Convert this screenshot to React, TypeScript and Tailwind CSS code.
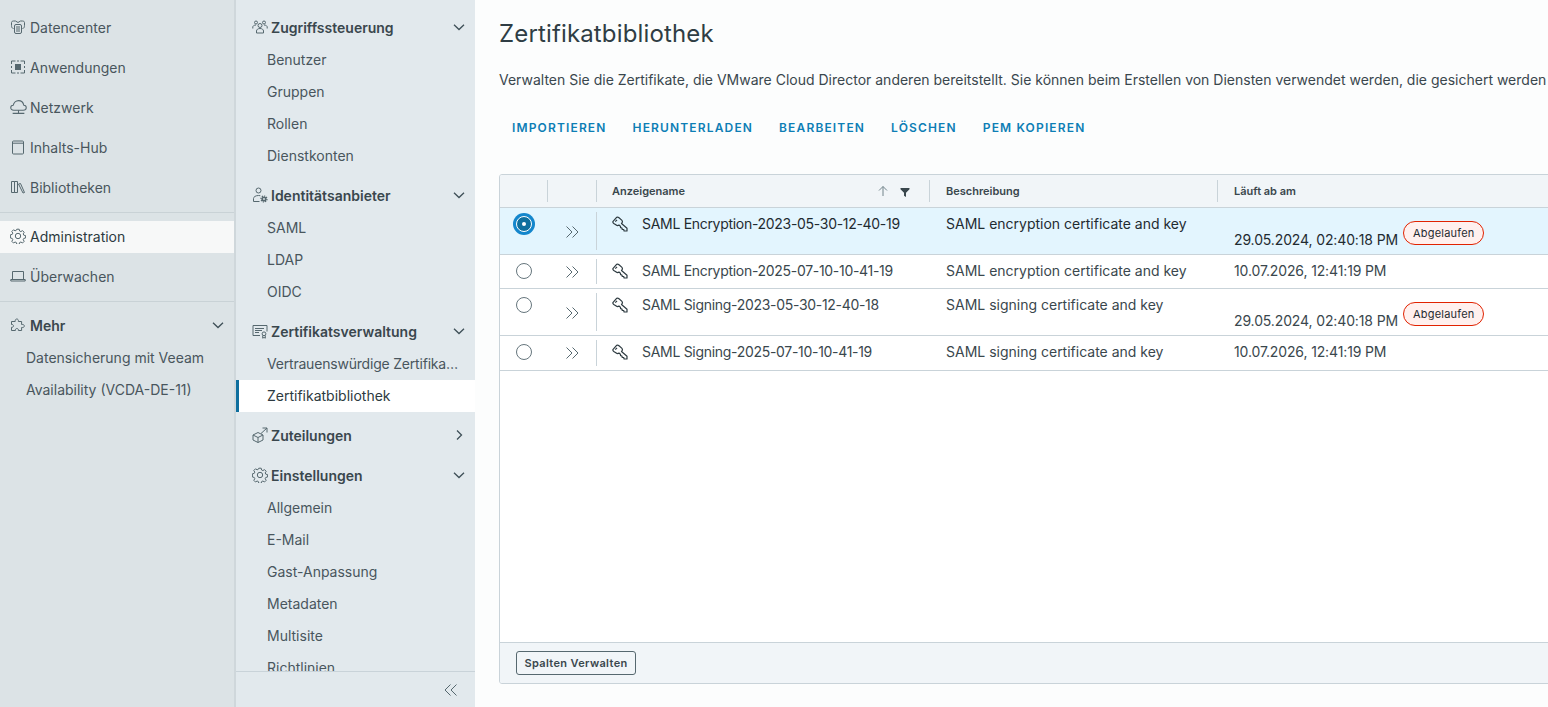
import type { ReactNode } from 'react';

const Icon = ({ children, className = 'w-4 h-4' }: { children: ReactNode; className?: string }) => (
  <svg viewBox="0 0 16 16" fill="none" stroke="currentColor" strokeWidth="1" className={`${className} shrink-0`}>
    {children}
  </svg>
);

const Datacenter = () => (
  <Icon>
    <path d="M3.500 9.500C2 9.500 1.500 8 1.500 6.500V3.500C1.500 2.500 2.500 2 3.500 2H5.500L8 3.500 10.500 2H12.500C13.500 2 14.500 2.500 14.500 3.500V6.500C14.500 8 14 9.500 12.500 9.500" />
    <rect x="4.500" y="5.500" width="7" height="9" rx="1.500" />
    <path d="M6 8h4M6 10h4M6 12h4" />
  </Icon>
);
const Apps = () => (
  <Icon>
    <rect x="5" y="5" width="6" height="6" fill="currentColor" stroke="none" />
    <path d="M1.500 5V2h4M10.500 2h4v3M14.500 11v3h-4M5.500 14h-4v-3M7 2h2M7 14h2M1.500 7v2M14.500 7v2" />
  </Icon>
);
const Cloud = () => (
  <Icon className="w-[17px] h-[17px]">
    <path d="M3.500 10.500C1.500 10.500.7 9.300.7 8.200c0-1.200 1-2.200 2.300-2.300C3.500 3.500 5.700 1.500 8 1.500c2.500 0 4.500 1.900 5 4.400 1.300.1 2.300 1.100 2.300 2.300 0 1.100-.8 2.300-2.800 2.300z" />
    <path d="M8 10.500v3M2.500 13.500h11" />
  </Icon>
);
const Book = () => (
  <Icon>
    <rect x="2.500" y="2" width="11" height="13" rx="1" />
    <path d="M2.500 4.200h11" />
  </Icon>
);
const Library = () => (
  <Icon>
    <path d="M1.500 2.500h3v11h-3zM4.500 2.500h3v11h-3zM8.500 5l2-.5 4 9-1.500.5z" />
  </Icon>
);
const Gear = () => (
  <Icon>
    <circle cx="8" cy="8" r="2.700" />
    <path d="M6.800 1.200h2.400l.4 1.800 1.300.6 1.600-1 1.700 1.700-1 1.600.6 1.300 1.800.4v2.400l-1.800.4-.6 1.300 1 1.600-1.700 1.700-1.600-1-1.300.6-.4 1.800H6.800l-.4-1.800-1.300-.6-1.600 1-1.700-1.700 1-1.600-.6-1.300-1.800-.4V6.800l1.800-.4.6-1.300-1-1.600 1.700-1.700 1.600 1 1.300-.6z" strokeLinejoin="round" />
  </Icon>
);
const Laptop = () => (
  <Icon>
    <path d="M2.500 11V3.500h11V11" />
    <path d="M.8 11.500h14.400v1.500H.8z" />
  </Icon>
);
const Puzzle = () => (
  <Icon>
    <path d="M1.500 4.500h3.700C5 2.800 5.800 2 6.800 2s1.800.8 1.600 2.500h3.200v3c1.700-.2 2.800.5 2.800 1.500s-1.100 1.700-2.800 1.500v3h-3.200c.2-1.300-.5-2-1.500-2s-1.700.7-1.500 2H1.500v-3.200c1.300.2 2-.5 2-1.400s-.7-1.600-2-1.400z" strokeLinejoin="round" />
  </Icon>
);
const Users = () => (
  <Icon>
    <circle cx="8" cy="6.500" r="2" />
    <path d="M4.500 14v-2c0-1.500 1.500-2.500 3.500-2.500s3.500 1 3.500 2.500v2z" />
    <circle cx="4" cy="3.500" r="1.500" />
    <circle cx="12" cy="3.500" r="1.500" />
    <path d="M.8 9.500V8c0-1 1.200-2 3.200-2M15.200 9.500V8c0-1-1.200-2-3.200-2" />
  </Icon>
);
const UserGear = () => (
  <Icon>
    <circle cx="6.500" cy="3.500" r="2.500" />
    <path d="M1.500 14.500v-3c0-1.500 2-3 5-3 .7 0 1.300.1 1.800.2M1.500 14.500h6" />
    <circle cx="12" cy="12" r="2.600" fill="currentColor" stroke="none" />
    <circle cx="12" cy="12" r="3" strokeDasharray="1.200 1.100" strokeWidth="1.200" />
    <circle cx="12" cy="12" r=".9" fill="#e2e9ed" stroke="none" />
  </Icon>
);
const Certificate = () => (
  <Icon>
    <path d="M8 12.500H1V2.500h14v6" />
    <path d="M3 5.500h9M3 7.500h7M3 9.500h4" />
    <circle cx="12" cy="10.800" r="1.900" />
    <path d="M10.700 12.500v2.700l1.300-.8 1.300.8v-2.700" />
  </Icon>
);
const BoxArrow = () => (
  <Icon>
    <path d="M1 8l5-2.500L11 8v5l-5 2.500L1 13zM1 8l5 2.500L11 8M6 10.500v5" />
    <path d="M9 6.500L15 1M10.500 1H15v4.500" />
  </Icon>
);
const Key = () => (
  <svg viewBox="0 0 16 16" fill="none" stroke="currentColor" strokeWidth="1.200" className="w-4 h-4 shrink-0">
    <path
      d="M.9 5.700L4.800 1.200C5.500.9 6.300 1.100 7 1.700L9.700 4.100C10.400 4.800 10.600 5.800 10.100 6.700L9.500 7.500 15 12.200V15H12.100L11.700 13.500H10.300L9.900 12 8.600 11.600 8.400 10.200 7 9C6.100 9.700 5 9.600 4.200 9L1.800 7.400C1 6.800.7 6.200.9 5.700z"
      strokeLinejoin="round"
    />
    <path d="M3.300 5.600L5 3.800" />
  </svg>
);

const Chevron = ({ right = false }: { right?: boolean }) => (
  <svg viewBox="0 0 12 12" fill="none" stroke="currentColor" strokeWidth="1.300" className="w-3 h-3 text-[#3f5058]">
    <path d={right ? 'M4 1.500L8.500 6 4 10.500' : 'M1 3.700L6 8.500l5-4.800'} />
  </svg>
);
const DoubleAngle = ({ left = false }: { left?: boolean }) => (
  <svg viewBox="0 0 14 14" fill="none" stroke="currentColor" strokeWidth="1" className="w-[14px] h-[14px] text-[#56686f]">
    <path d={left ? 'M6.500 1.500L1 7l5.500 5.500M12.500 1.500L7 7l5.500 5.500' : 'M1.500 1.500L7 7l-5.500 5.500M7.500 1.500L13 7l-5.500 5.500'} />
  </svg>
);

const mainNav: { label: string; icon: ReactNode }[] = [
  { label: 'Datencenter', icon: <Datacenter /> },
  { label: 'Anwendungen', icon: <Apps /> },
  { label: 'Netzwerk', icon: <Cloud /> },
  { label: 'Inhalts-Hub', icon: <Book /> },
  { label: 'Bibliotheken', icon: <Library /> },
];

const groups: { title: string; icon: ReactNode; open: boolean; items: string[] }[] = [
  { title: 'Zugriffssteuerung', icon: <Users />, open: true, items: ['Benutzer', 'Gruppen', 'Rollen', 'Dienstkonten'] },
  { title: 'Identitätsanbieter', icon: <UserGear />, open: true, items: ['SAML', 'LDAP', 'OIDC'] },
  { title: 'Zertifikatsverwaltung', icon: <Certificate />, open: true, items: ['Vertrauenswürdige Zertifika…', 'Zertifikatbibliothek'] },
  { title: 'Zuteilungen', icon: <BoxArrow />, open: false, items: [] },
  { title: 'Einstellungen', icon: <Gear />, open: true, items: ['Allgemein', 'E-Mail', 'Gast-Anpassung', 'Metadaten', 'Multisite', 'Richtlinien'] },
];

const rows = [
  { name: 'SAML Encryption-2023-05-30-12-40-19', desc: 'SAML encryption certificate and key', date: '29.05.2024, 02:40:18 PM', expired: true, selected: true },
  { name: 'SAML Encryption-2025-07-10-10-41-19', desc: 'SAML encryption certificate and key', date: '10.07.2026, 12:41:19 PM', expired: false, selected: false },
  { name: 'SAML Signing-2023-05-30-12-40-18', desc: 'SAML signing certificate and key', date: '29.05.2024, 02:40:18 PM', expired: true, selected: false },
  { name: 'SAML Signing-2025-07-10-10-41-19', desc: 'SAML signing certificate and key', date: '10.07.2026, 12:41:19 PM', expired: false, selected: false },
];

const actions = ['Importieren', 'Herunterladen', 'Bearbeiten', 'Löschen', 'PEM kopieren'];
const cols = 'grid grid-cols-[48px_49px_333px_288px_1fr]';

const HeaderCell = ({ children, last = false }: { children?: ReactNode; last?: boolean }) => (
  <div className={`h-[22px] flex items-center pl-[16px] ${last ? '' : 'border-r border-[#c9d3d9]'}`}>{children}</div>
);

export default function App() {
  return (
    <div className="flex h-[707px] w-[1548px] overflow-hidden bg-[#fcfdfd] text-[#49565d] font-['Inter','Noto_Sans',sans-serif] text-[14px]">
      {/* Primary nav */}
      <nav className="w-[236px] shrink-0 bg-[#dce3e6] border-r-2 border-[#cfd7db] pt-2">
        {mainNav.map((n) => (
          <div key={n.label} className="h-10 flex items-center gap-1 pl-[10px] pb-[2px]">
            <span className="w-4 flex justify-center text-[#56686f]">{n.icon}</span>
            <span>{n.label}</span>
          </div>
        ))}
        <div className="mt-1 border-t border-[#c9d2d6]" />
        <div className="mt-2 h-8 flex items-center gap-1 pl-[10px] pb-[2px] bg-[#f7f8f8] text-[#2d3a40]">
          <span className="w-4 flex justify-center text-[#56686f]"><Gear /></span>
          <span>Administration</span>
        </div>
        <div className="mt-1 h-10 flex items-center gap-1 pl-[10px] pb-[2px]">
          <span className="w-4 flex justify-center text-[#56686f]"><Laptop /></span>
          <span>Überwachen</span>
        </div>
        <div className="mt-1 border-t border-[#c9d2d6]" />
        <div className="mt-2 h-8 flex items-center gap-1 pl-[10px] pr-[10px] pb-[2px] font-semibold text-[#3a474d]">
          <span className="w-4 flex justify-center text-[#56686f]"><Puzzle /></span>
          <span className="flex-1">Mehr</span>
          <Chevron />
        </div>
        <div className="h-8 flex items-center pl-[26px] pb-[2px]">Datensicherung mit Veeam</div>
        <div className="h-8 flex items-center pl-[26px] pb-[2px]">Availability (VCDA-DE-11)</div>
      </nav>

      {/* Secondary nav */}
      <aside className="w-[239px] shrink-0 bg-[#e2e9ed] flex flex-col">
        <div className="flex-1 overflow-hidden pt-3">
          {groups.map((g) => (
            <div key={g.title} className="mb-2">
              <div className="h-8 flex items-center gap-[3px] pl-[16px] pr-[10px] pb-[2px] font-semibold text-[#3a474d]">
                <span className="text-[#56686f]">{g.icon}</span>
                <span className="flex-1">{g.title}</span>
                <Chevron right={!g.open} />
              </div>
              {g.items.map((item) =>
                item === 'Zertifikatbibliothek' ? (
                  <div key={item} className="h-8 flex items-center pl-[28px] pb-[2px] bg-white border-l-[3px] border-[#0f6f9e] text-[#2d3a40]">
                    {item}
                  </div>
                ) : (
                  <div key={item} className="h-8 flex items-center pl-[31px] pb-[2px]">
                    <span className={`whitespace-nowrap ${item.endsWith('…') ? 'tracking-[-0.2px]' : ''}`}>{item}</span>
                  </div>
                ),
              )}
            </div>
          ))}
        </div>
        <div className="h-9 shrink-0 border-t border-[#c9d3d9] flex items-center justify-end pr-[17px]">
          <DoubleAngle left />
        </div>
      </aside>

      {/* Content */}
      <main className="w-[1300px] shrink-0 pl-6 pt-[9px] pb-[23px] flex flex-col">
        <h1 className="text-[24px] leading-[50px] tracking-[0.15px] text-[#2f3d44]">Zertifikatbibliothek</h1>
        <p className="mt-[9px] leading-6 whitespace-nowrap text-[#3a474d]">
          Verwalten Sie die Zertifikate, die VMware Cloud Director anderen bereitstellt. Sie können beim Erstellen von Diensten verwendet werden, die gesichert werden müssen.
        </p>
        <div className="mt-[18px] flex gap-[26px] pl-[13px] h-[36px] items-center">
          {actions.map((a) => (
            <button key={a} className="uppercase text-[12px] font-semibold tracking-[1.15px] text-[#0d7eb5]">{a}</button>
          ))}
        </div>
        <div className="mt-[28px] flex-1 border border-[#c9d3d9] rounded-[3px] flex flex-col overflow-hidden">
          <div className={`${cols} h-[33px] items-center bg-[#f1f5f8] border-b border-[#c9d3d9] text-[11px] font-semibold text-[#3a474d]`}>
            <HeaderCell />
            <HeaderCell />
            <HeaderCell>
              <span className="flex-1 -ml-px">Anzeigename</span>
              <svg viewBox="0 0 12 12" fill="none" stroke="currentColor" className="w-3 h-3 text-[#72848b] mr-[10px]">
                <path d="M6 11V1.500M2 5.500l4-4 4 4" />
              </svg>
              <svg viewBox="0 0 12 12" className="w-3 h-3 text-[#3a474d] mr-[18px] mt-[2px]" fill="currentColor">
                <path d="M1.500 2h9v1.300L7 6.800V11L5 9.800v-3L1.500 3.300z" />
              </svg>
            </HeaderCell>
            <HeaderCell>Beschreibung</HeaderCell>
            <HeaderCell last>Läuft ab am</HeaderCell>
          </div>
          <div className="flex-1 bg-white">
            {rows.map((r) => (
              <div
                key={r.name}
                className={`${cols} border-b border-[#c9d3d9] ${r.selected ? 'bg-[#e3f5fe] text-[#1f2b31]' : 'text-[#3a474d]'} ${r.expired ? 'h-[47px]' : r.name.includes('Encryption') ? 'h-[34px]' : 'h-[35px]'}`}
              >
                <div className="flex justify-center pt-[5px]">
                  {r.selected ? (
                    <span className="w-[22px] h-[22px] rounded-full bg-[#1486cc] flex items-center justify-center">
                      <span className="w-4 h-4 rounded-full border border-white bg-[#0f6f9e] flex items-center justify-center">
                        <span className="w-1 h-1 rounded-full bg-white" />
                      </span>
                    </span>
                  ) : (
                    <span className="mt-[3px] w-4 h-4 rounded-full bg-white border border-[#66767d]" />
                  )}
                </div>
                <div className={`flex items-center my-1 border-r border-[#c9d3d9] pl-[17px] text-[#56686f] ${r.expired ? 'pt-[2px]' : ''}`}>
                  <DoubleAngle />
                </div>
                <div className="pl-[15px] pt-[6px] flex items-start gap-[14px]">
                  <span className="text-[#2d3a40] pt-[2px]"><Key /></span>
                  <span className="leading-[20px] tracking-[-0.3px]">{r.name}</span>
                </div>
                <div className="pl-[16px] pt-[6px] leading-[20px]">{r.desc}</div>
                <div className={`pl-[16px] flex items-start ${r.expired ? 'pt-[13px]' : 'pt-[6px]'}`}>
                  <span className={`leading-[20px] tracking-[-0.13px] ${r.expired ? 'pt-[9px]' : ''}`}>{r.date}</span>
                  {r.expired && (
                    <span className="ml-[5px] h-6 px-[9px] rounded-full border border-[#e12200] bg-[#fff0ee] text-[#1f2b31] text-[11px] tracking-[0.2px] flex items-center">
                      Abgelaufen
                    </span>
                  )}
                </div>
              </div>
            ))}
          </div>
          <div className="h-[41px] shrink-0 bg-[#f1f5f8] border-t border-[#c9d3d9] flex items-center pl-4">
            <button className="h-6 w-[120px] rounded-[3px] border border-[#56686f] text-[11px] tracking-[0.35px] font-semibold text-[#3a474d]">Spalten Verwalten</button>
          </div>
        </div>
      </main>
    </div>
  );
}
